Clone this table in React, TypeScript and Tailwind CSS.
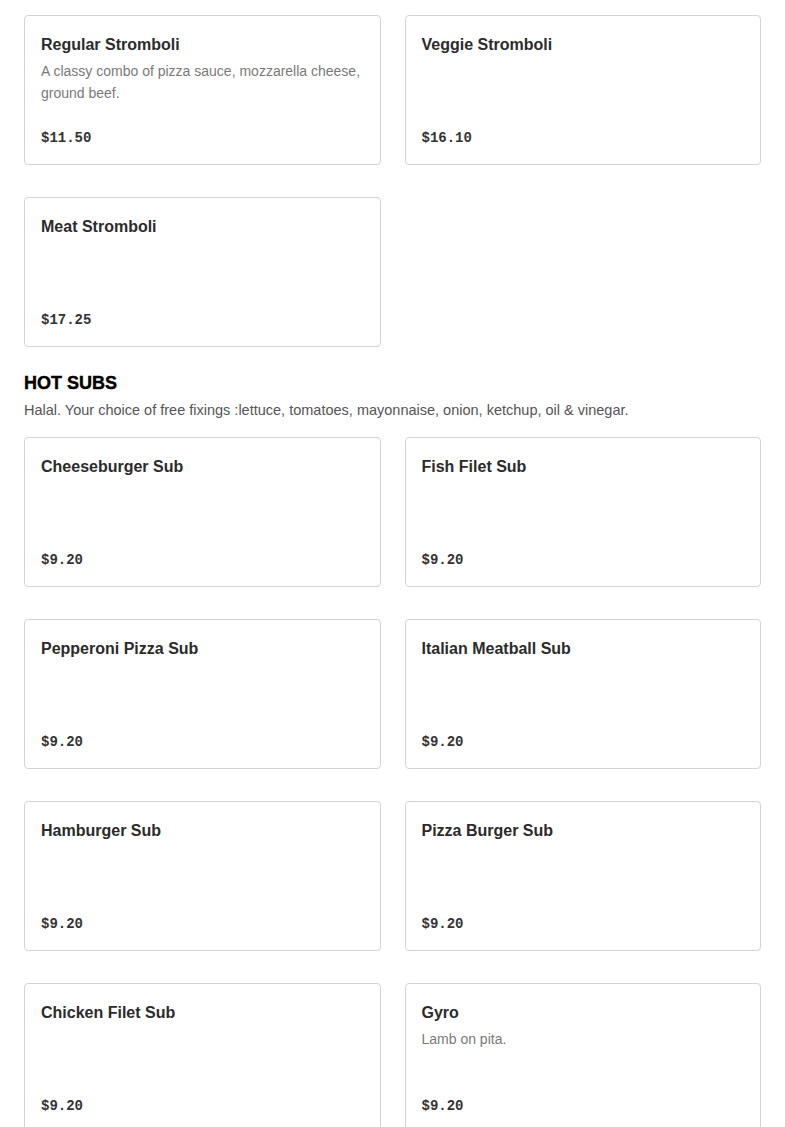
import React from 'react';

type Item = { name: string; desc?: string; price: string };

const stromboli: Item[] = [
  { name: 'Regular Stromboli', desc: 'A classy combo of pizza sauce, mozzarella cheese, ground beef.', price: '$11.50' },
  { name: 'Veggie Stromboli', price: '$16.10' },
  { name: 'Meat Stromboli', price: '$17.25' },
];

const hotSubs: Item[] = [
  { name: 'Cheeseburger Sub', price: '$9.20' },
  { name: 'Fish Filet Sub', price: '$9.20' },
  { name: 'Pepperoni Pizza Sub', price: '$9.20' },
  { name: 'Italian Meatball Sub', price: '$9.20' },
  { name: 'Hamburger Sub', price: '$9.20' },
  { name: 'Pizza Burger Sub', price: '$9.20' },
  { name: 'Chicken Filet Sub', price: '$9.20' },
  { name: 'Gyro', desc: 'Lamb on pita.', price: '$9.20' },
];

const MenuCard: React.FC<{ item: Item }> = ({ item }) => (
  <div className="flex min-h-[150px] flex-col rounded-[4px] border border-[#d4d4d4] bg-white px-4 pt-[17px] pb-[14px]">
    <div className="text-[16px] font-semibold leading-6 text-[#2b2b2b]">{item.name}</div>
    {item.desc && <div className="mt-[3px] text-[14px] leading-[22px] text-[#7a7a7a]">{item.desc}</div>}
    <div className="mt-auto pt-3 font-['Liberation_Mono',monospace] text-[14px] font-bold leading-6 text-[#333]">{item.price}</div>
  </div>
);

export default function App() {
  return (
    <div className="min-h-screen bg-white px-6 pt-[15px] font-['Liberation_Sans',Arial,sans-serif]">
      <div className="grid grid-cols-2 gap-x-6 gap-y-8">
        {stromboli.map(i => <MenuCard key={i.name} item={i} />)}
      </div>

      <div className="mt-6">
        <h2 className="text-[18px] font-black leading-6 text-black [-webkit-text-stroke:0.4px_black]">HOT SUBS</h2>
        <p className="mt-[5px] text-[14.5px] leading-5 text-[#555]">Halal. Your choice of free fixings :lettuce, tomatoes, mayonnaise, onion, ketchup, oil &amp; vinegar.</p>
      </div>

      <div className="mt-[17px] grid grid-cols-2 gap-x-6 gap-y-8">
        {hotSubs.map(i => <MenuCard key={i.name} item={i} />)}
      </div>
    </div>
  );
}
